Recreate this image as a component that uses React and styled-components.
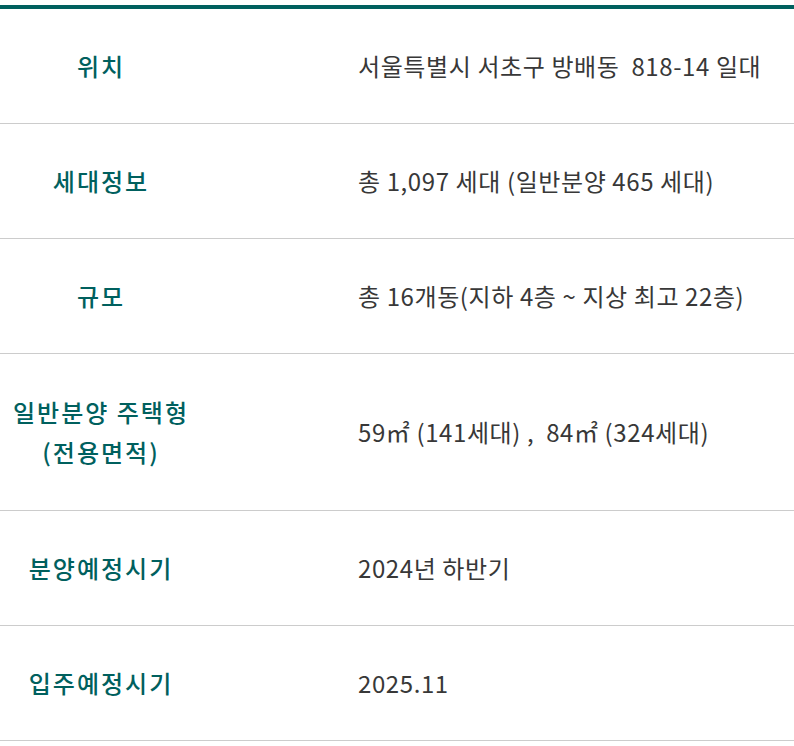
import React from 'react';
import styled, { createGlobalStyle } from 'styled-components';

const GlobalStyle = createGlobalStyle`
    html, body {
        margin: 0;
        padding: 0;
        background: #ffffff;
    }
    body {
        font-family: "Noto Sans CJK KR", "Noto Sans", sans-serif;
    }
`;

const Wrapper = styled.div`
    padding-top: 5px;
    width: 794px;
`;

const InfoTable = styled.div`
    border-top: 4px solid #00605e;
`;

const Row = styled.div`
    display: grid;
    grid-template-columns: 200px 1fr;
    align-items: center;
    min-height: ${props => props.$tall ? '156px' : '114px'};
    border-bottom: 1px solid #cccccc;
`;

const Label = styled.div`
    text-align: center;
    color: #00605e;
    font-size: 24px;
    font-weight: 500;
    line-height: 40px;
    letter-spacing: 2px;
    padding-left: 2px;
`;

const Value = styled.div`
    padding-left: 158px;
    color: #383838;
    font-size: 24px;
    line-height: 40px;
    letter-spacing: 0.6px;
    white-space: pre-wrap;
`;

const rows = [
    { label: '위치', value: '서울특별시 서초구 방배동  818-14 일대' },
    { label: '세대정보', value: '총 1,097 세대 (일반분양 465 세대)' },
    { label: '규모', value: '총 16개동(지하 4층 ~ 지상 최고 22층)' },
    {
        label: <>일반분양 주택형<br />(전용면적)</>,
        value: '59㎡ (141세대) ,  84㎡ (324세대)',
        tall: true,
    },
    { label: '분양예정시기', value: '2024년 하반기' },
    { label: '입주예정시기', value: '2025.11' },
];

export default function App() {
    return (
        <Wrapper>
            <GlobalStyle />
            <InfoTable>
                {rows.map((r, i) => (
                    <Row key={i} $tall={r.tall}>
                        <Label>{r.label}</Label>
                        <Value>{r.value}</Value>
                    </Row>
                ))}
            </InfoTable>
        </Wrapper>
    );
}
